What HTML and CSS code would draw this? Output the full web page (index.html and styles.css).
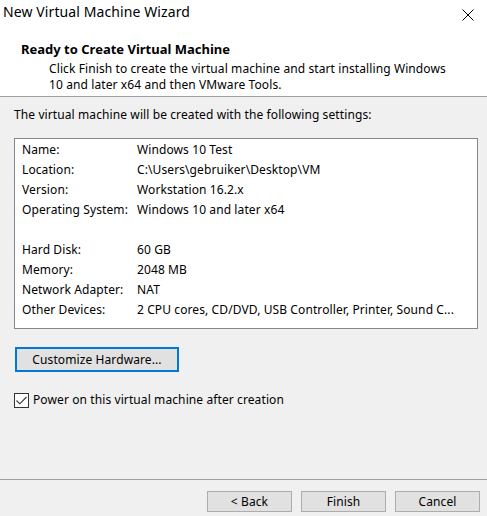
FILE: index.html
```html
<!DOCTYPE html>
<html lang="en">
<head>
  <meta charset="UTF-8">
  <title>New Virtual Machine Wizard</title>
  <link rel="stylesheet" href="styles.css">
</head>
<body>
  <div class="dialog">
    <div class="top">
      <div class="titlebar">
        <span class="title">New Virtual Machine Wizard</span>
        <svg class="close" width="12" height="12" viewBox="0 0 12 12">
          <path d="M0.5 0.5 L11.5 11.5 M11.5 0.5 L0.5 11.5" stroke="#000" stroke-width="1" fill="none"/>
        </svg>
      </div>
      <div class="header">
        <h1>Ready to Create Virtual Machine</h1>
        <p>Click Finish to create the virtual machine and start installing Windows 10 and later x64 and then VMware Tools.</p>
      </div>
    </div>

    <div class="content">
      <p class="intro">The virtual machine will be created with the following settings:</p>
      <div class="summary">
        <div class="row"><span class="key">Name:</span><span class="val">Windows 10 Test</span></div>
        <div class="row"><span class="key">Location:</span><span class="val">C:\Users\gebruiker\Desktop\VM</span></div>
        <div class="row"><span class="key">Version:</span><span class="val">Workstation 16.2.x</span></div>
        <div class="row"><span class="key">Operating System:</span><span class="val">Windows 10 and later x64</span></div>
        <div class="row"></div>
        <div class="row"><span class="key">Hard Disk:</span><span class="val">60 GB</span></div>
        <div class="row"><span class="key">Memory:</span><span class="val">2048 MB</span></div>
        <div class="row"><span class="key">Network Adapter:</span><span class="val">NAT</span></div>
        <div class="row"><span class="key">Other Devices:</span><span class="val">2 CPU cores, CD/DVD, USB Controller, Printer, Sound C...</span></div>
      </div>
      <button class="btn btn-focus">Customize Hardware...</button>
      <label class="check">
        <span class="box">
          <svg width="11" height="9" viewBox="0 0 11 9">
            <path d="M0.5 4.5 L3.8 7.8 L10.5 1" stroke="#333" stroke-width="1.1" fill="none"/>
          </svg>
        </span>
        Power on this virtual machine after creation
      </label>
    </div>

    <div class="footer">
      <button class="btn">&lt; Back</button>
      <button class="btn">Finish</button>
      <button class="btn">Cancel</button>
    </div>
  </div>
</body>
</html>
```

FILE: styles.css
```css
body {
  margin: 0;
  font-family: "Noto Sans", sans-serif;
  font-size: 12px;
  letter-spacing: 0.1px;
  color: #000;
  background: #f0f0f0;
}
.dialog {
  width: 487px;
  height: 516px;
  display: flex;
  flex-direction: column;
  background: #f0f0f0;
}
.top {
  background: #fff;
  height: 97px;
  box-sizing: border-box;
  border-bottom: 1px solid #a0a0a0;
}
.titlebar {
  display: flex;
  justify-content: space-between;
  align-items: flex-start;
  height: 30px;
  box-sizing: border-box;
  padding: 2px 13px 0 3px;
}
.title {
  font-size: 14px;
  line-height: 20px;
}
.close {
  margin-top: 7px;
}
.header {
  padding: 11px 20px 0 21px;
}
.header h1 {
  margin: 0;
  font-size: 13px;
  line-height: 16px;
  font-weight: bold;
  letter-spacing: 0;
}
.header p {
  width: 405px;
  margin: 4px 0 0 28px;
  line-height: 16px;
}
.content {
  flex: 1;
  padding: 10px 9px 0 14px;
}
.intro {
  margin: 0;
  line-height: 16px;
}
.summary {
  margin-top: 15px;
  background: #fff;
  border: 1px solid #828790;
  padding: 1px 0 8px 7px;
  height: 191px;
  box-sizing: border-box;
}
.row {
  display: flex;
  height: 20px;
  line-height: 20px;
  white-space: nowrap;
}
.key {
  width: 115px;
}
.btn {
  font-family: inherit;
  font-size: 12px;
  letter-spacing: 0.1px;
  color: #000;
  background: #e1e1e1;
  border: 1px solid #adadad;
  width: 85px;
  height: 21px;
  padding: 0;
}
.btn-focus {
  display: block;
  width: 164px;
  height: 25px;
  margin: 18px 0 0 1px;
  border: 2px solid #0078d7;
}
.check {
  display: flex;
  align-items: center;
  margin-top: 20px;
  line-height: 16px;
}
.box {
  display: flex;
  align-items: center;
  justify-content: center;
  width: 15px;
  height: 15px;
  box-sizing: border-box;
  border: 1px solid #333;
  background: #fff;
  margin-right: 4px;
}
.footer {
  display: flex;
  justify-content: flex-end;
  gap: 9px;
  height: 37px;
  box-sizing: border-box;
  border-top: 1px solid #a0a0a0;
  padding: 11px 7px 0 0;
}
```
